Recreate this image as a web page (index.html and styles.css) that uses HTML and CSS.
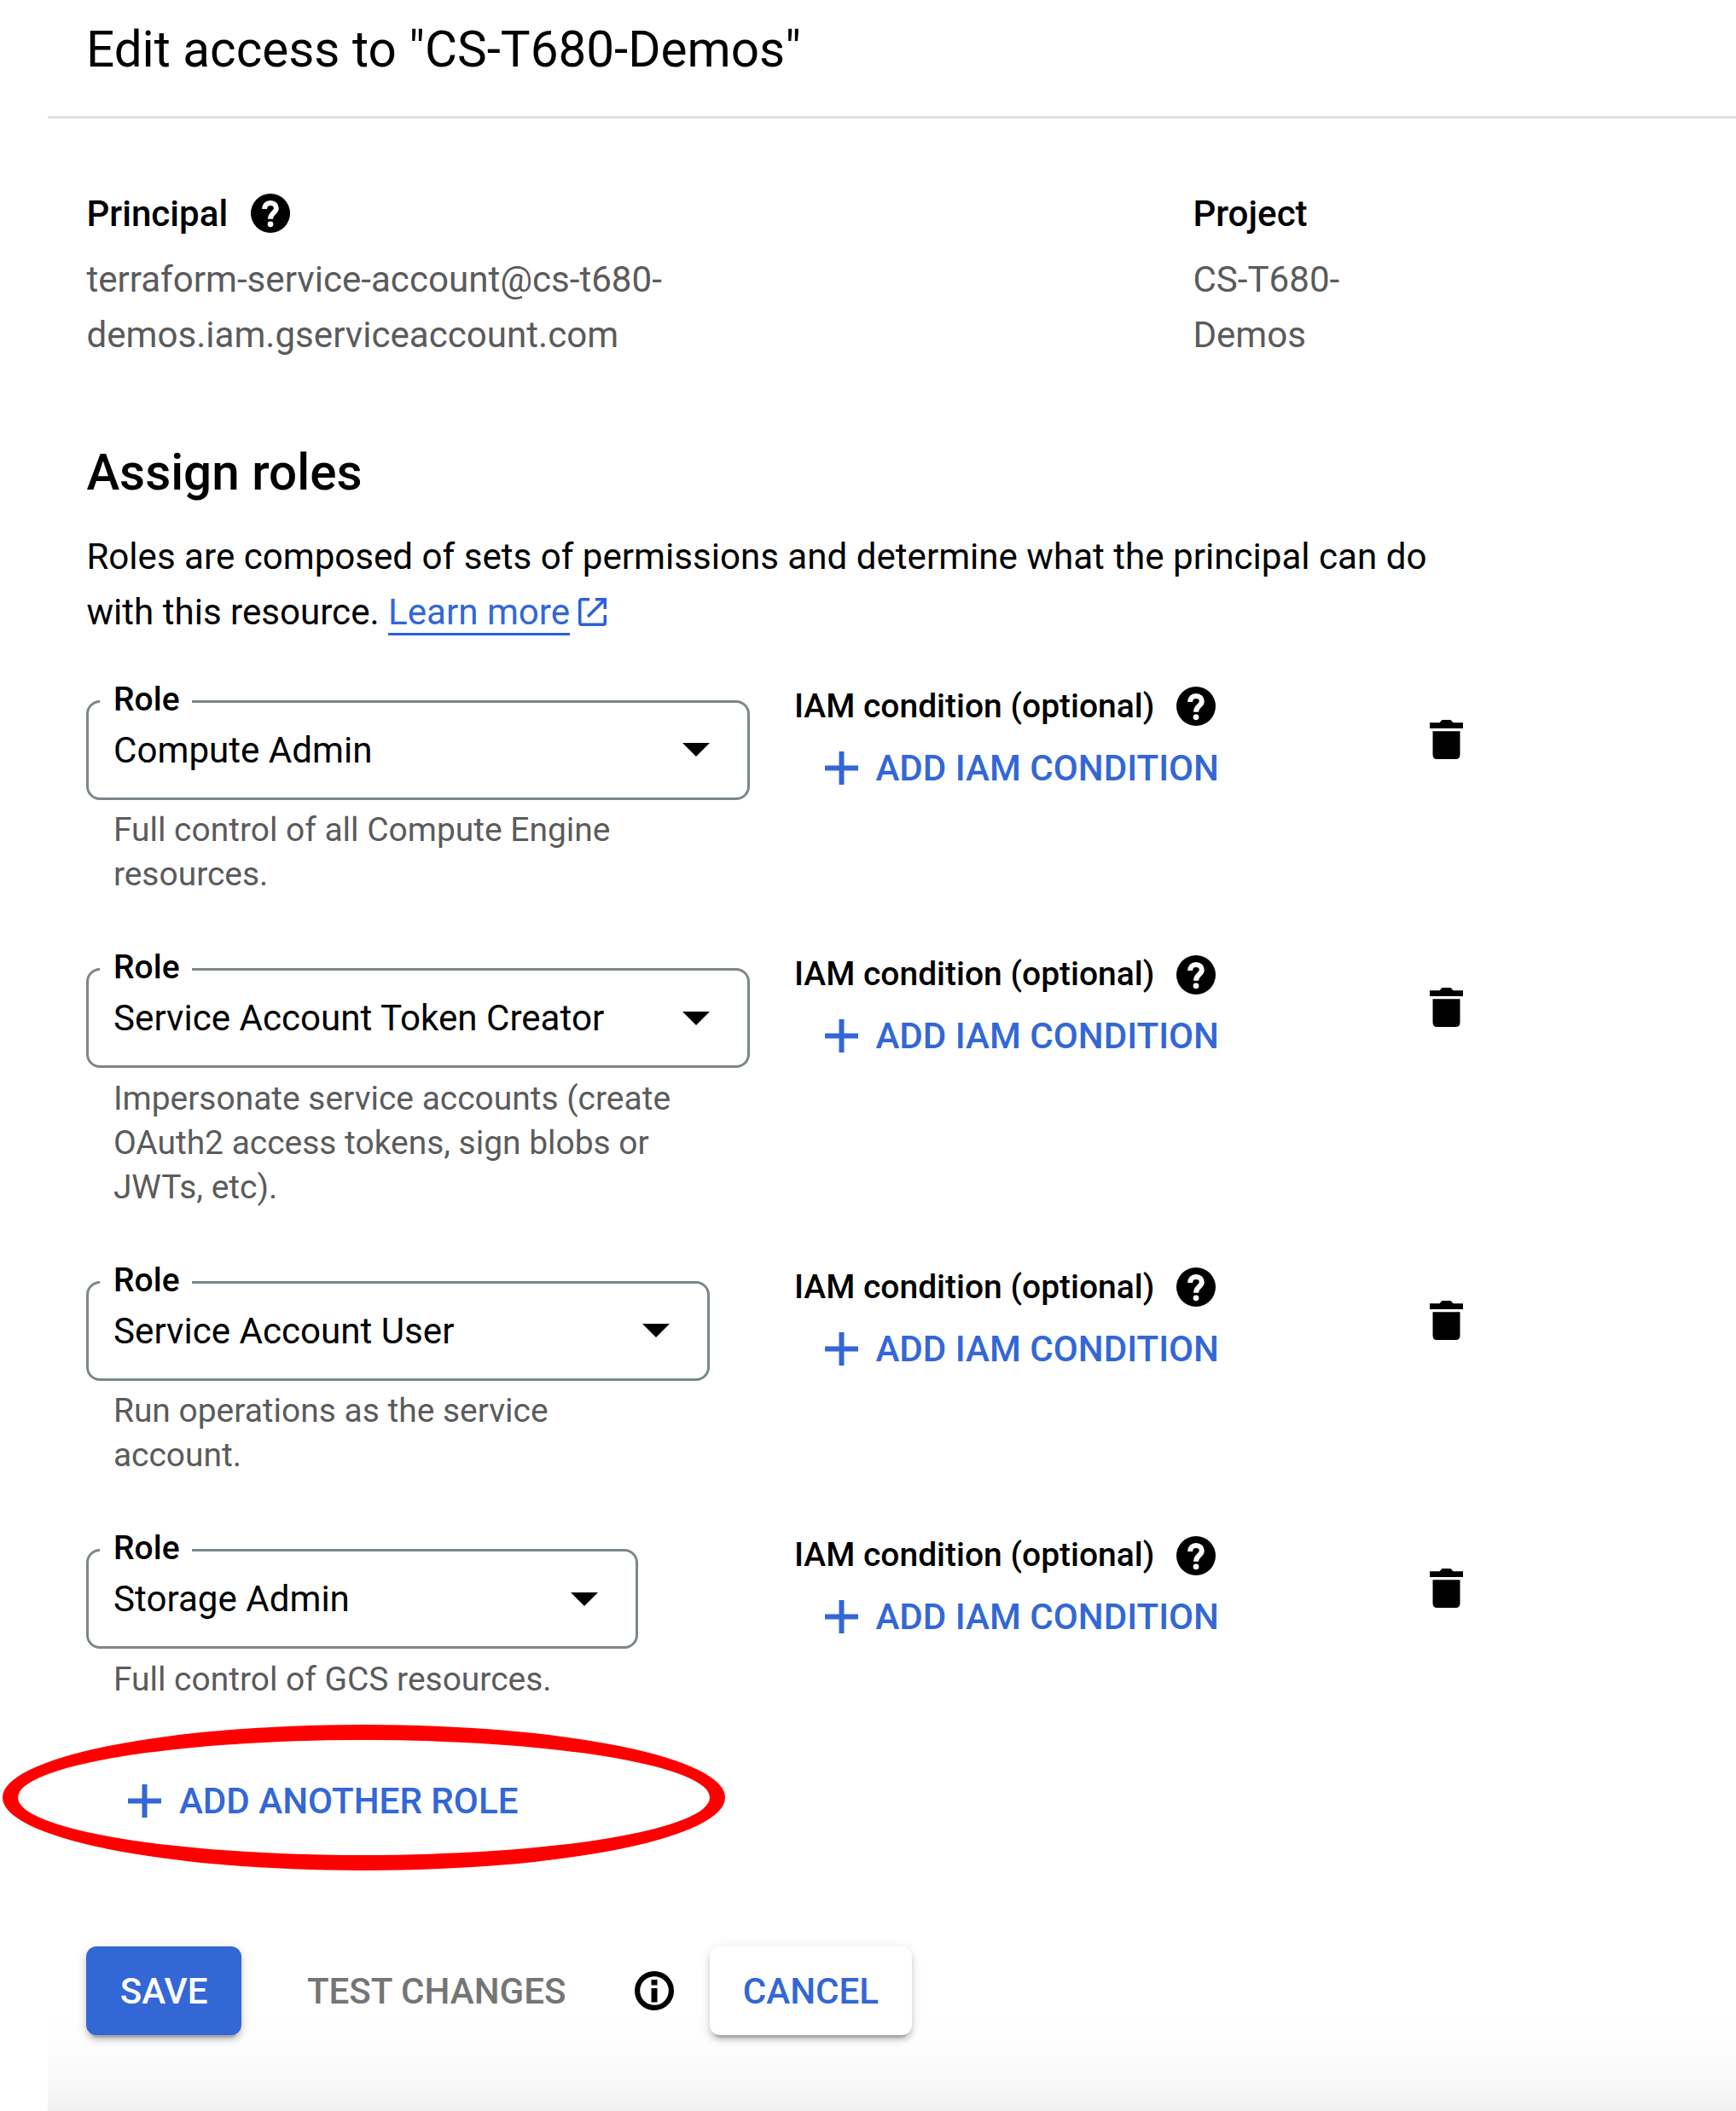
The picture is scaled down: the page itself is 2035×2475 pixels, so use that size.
FILE: index.html
```
<!DOCTYPE html>
<html lang="en">
<head>
<meta charset="utf-8">
<title>Edit access</title>
<link rel="stylesheet" href="styles.css">
</head>
<body>
<svg class="sprite" aria-hidden="true">
  <symbol id="help" viewBox="0 0 46 46">
    <circle cx="23" cy="23" r="23"/>
    <path d="M16.1 18C16.1 13.6 18.9 11 23 11S29.8 13.6 29.8 17.2C29.8 22.4 23 22.6 23 29.8" fill="none" stroke="#fff" stroke-width="6"/>
    <circle cx="23" cy="35.8" r="3.4" fill="#fff"/>
  </symbol>
  <symbol id="plus" viewBox="0 0 39 39"><path d="M16.5 0h6v16.5H39v6H22.5V39h-6V22.500H0v-6h16.500z"/></symbol>
  <symbol id="trash" viewBox="0 0 39 46"><path d="M0 3.300H11.500L14.500 0H24.500L27.500 3.300H39V10H0zM3.500 13.300H35.500V40.500Q35.500 46 30.500 46H8.500Q3.500 46 3.500 40.500z"/></symbol>
  <symbol id="caret" viewBox="0 0 32 16"><path d="M0 0h32L16 16z"/></symbol>
</svg>

<main class="panel">
  <header class="header"><h1 class="title">Edit access to "CS-T680-Demos"</h1></header>

  <div class="content">
    <section class="summary">
      <div>
        <h2 class="label">Principal <svg class="help"><use href="#help"/></svg></h2>
        <p class="value">terraform-service-account@cs-t680-<br>demos.iam.gserviceaccount.com</p>
      </div>
      <div>
        <h2 class="label">Project</h2>
        <p class="value">CS-T680-<br>Demos</p>
      </div>
    </section>

    <h2 class="section-title">Assign roles</h2>
    <p class="intro">Roles are composed of sets of permissions and determine what the principal can do<br>with this resource. <a class="link">Learn more</a><svg class="external" viewBox="0 0 32 32"><path d="M12.700 1.700H3.700Q1.700 1.700 1.700 3.700V28.300Q1.700 30.300 3.700 30.300H28.300Q30.300 30.300 30.300 28.300V19.300M19.300 1.700H30.300V12.700M30 2L10.700 21.300" fill="none" stroke="currentColor" stroke-width="3.400"/></svg></p>

    <div class="roles">
      <div class="row">
        <div class="role">
          <fieldset class="select"><legend class="legend"><span>Role</span></legend><div class="choice">Compute Admin<svg class="caret"><use href="#caret"/></svg></div></fieldset>
          <p class="hint">Full control of all Compute Engine resources.</p>
        </div>
        <div class="condition">
          <div class="condition-label">IAM condition (optional)<svg class="help"><use href="#help"/></svg></div>
          <div class="add"><svg class="plus"><use href="#plus"/></svg>ADD IAM CONDITION</div>
        </div>
        <svg class="trash"><use href="#trash"/></svg>
      </div>

      <div class="row">
        <div class="role">
          <fieldset class="select"><legend class="legend"><span>Role</span></legend><div class="choice">Service Account Token Creator<svg class="caret"><use href="#caret"/></svg></div></fieldset>
          <p class="hint">Impersonate service accounts (create OAuth2 access tokens, sign blobs or JWTs, etc).</p>
        </div>
        <div class="condition">
          <div class="condition-label">IAM condition (optional)<svg class="help"><use href="#help"/></svg></div>
          <div class="add"><svg class="plus"><use href="#plus"/></svg>ADD IAM CONDITION</div>
        </div>
        <svg class="trash"><use href="#trash"/></svg>
      </div>

      <div class="row">
        <div class="role role-medium">
          <fieldset class="select"><legend class="legend"><span>Role</span></legend><div class="choice">Service Account User<svg class="caret"><use href="#caret"/></svg></div></fieldset>
          <p class="hint">Run operations as the service account.</p>
        </div>
        <div class="condition">
          <div class="condition-label">IAM condition (optional)<svg class="help"><use href="#help"/></svg></div>
          <div class="add"><svg class="plus"><use href="#plus"/></svg>ADD IAM CONDITION</div>
        </div>
        <svg class="trash"><use href="#trash"/></svg>
      </div>

      <div class="row">
        <div class="role role-narrow">
          <fieldset class="select"><legend class="legend"><span>Role</span></legend><div class="choice">Storage Admin<svg class="caret"><use href="#caret"/></svg></div></fieldset>
          <p class="hint">Full control of GCS resources.</p>
        </div>
        <div class="condition">
          <div class="condition-label">IAM condition (optional)<svg class="help"><use href="#help"/></svg></div>
          <div class="add"><svg class="plus"><use href="#plus"/></svg>ADD IAM CONDITION</div>
        </div>
        <svg class="trash"><use href="#trash"/></svg>
      </div>
    </div>

    <div class="add add-role"><svg class="plus"><use href="#plus"/></svg>ADD ANOTHER ROLE
      <span class="highlight"></span>
    </div>

    <footer class="actions">
      <div class="button save">SAVE</div>
      <div class="test">TEST CHANGES</div>
      <svg class="info" viewBox="0 0 46 46"><circle cx="23" cy="23" r="19.900" fill="none" stroke="#000" stroke-width="6.200"/><path d="M19.500 10h7v6.500h-7zM19.500 20h7v16.500h-7z"/></svg>
      <div class="button cancel">CANCEL</div>
    </footer>
  </div>
</main>
</body>
</html>
```
FILE: styles.css
```
* { box-sizing: border-box; }

body {
  margin: 0;
  background: #fff;
  color: #000;
  font: 400 42.12px/65px Roboto, sans-serif;
}

h1, h2, p { margin: 0; font: inherit; }

.sprite { display: none; }

.panel {
  height: 2475px;
  margin-left: 56px;
  overflow: visible;
  background: linear-gradient(rgba(255, 255, 255, 0) 2360px, #fdfdfd 2400px, #f8f8f8 2445px, #f0f0f0 2475px);
}

.header {
  height: 139px;
  padding: 28px 0 0 45px;
  border-bottom: 3px solid #e0e0e0;
}

.title {
  font-size: 58.4px;
  line-height: 60px;
}

.content { padding: 81px 0 0 45.4px; }

.summary {
  display: grid;
  grid-template-columns: 1297px auto;
}

.label {
  display: flex;
  align-items: center;
  gap: 27px;
  height: 60px;
  margin-bottom: 15.4px;
  font-weight: 500;
}

.help {
  flex: none;
  width: 46px;
  height: 46px;
}

.value { color: #5b5b5b; }

.section-title {
  margin-top: 89px;
  font-size: 58.4px;
  font-weight: 500;
  line-height: 80px;
}

.intro { margin-top: 25.6px; }

.link {
  border-bottom: 3px solid #2a60d8;
  color: #3367d6;
}

.external {
  width: 33px;
  height: 33px;
  margin-left: 9.5px;
  vertical-align: -2px;
  color: #2a60d8;
}

.roles {
  display: grid;
  gap: 84.2px;
  padding-top: 71px;
}

.row {
  display: grid;
  grid-template-columns: 829.5px 745.5px auto;
  align-items: start;
}

.role { width: 778px; }
.role-medium { width: 731px; }
.role-narrow { width: 647px; }

.select {
  height: 117px;
  margin: 0;
  padding: 0 44.5px 0 28.7px;
  border: 3px solid #7d868b;
  border-radius: 16px;
}

.legend {
  height: 3px;
  margin-left: -16px;
  padding: 0 14px 0 16px;
  font-size: 39px;
  font-weight: 500;
}

.legend span {
  display: block;
  margin-top: -18.4px;
  line-height: 34px;
}

.choice {
  display: flex;
  align-items: center;
  justify-content: space-between;
  height: 111px;
}

.caret { width: 32px; height: 16px; }

.hint {
  margin-top: 9.3px;
  padding: 0 70px 0 31.5px;
  color: #5b5b5b;
  font-size: 38.95px;
  line-height: 52px;
}

.condition { margin-top: -16.5px; }

.condition-label {
  display: flex;
  align-items: center;
  gap: 26px;
  height: 48px;
  font-size: 39px;
  font-weight: 500;
}

.add {
  display: flex;
  align-items: center;
  gap: 20.5px;
  height: 60px;
  margin-top: 18px;
  padding-left: 36px;
  color: #3367d6;
  font-weight: 500;
}

.plus {
  width: 39px;
  height: 39px;
  fill: #3367d6;
}

.trash {
  width: 39px;
  height: 46px;
  margin-top: 23px;
}

.add-role {
  position: relative;
  margin-top: 87px;
  padding-left: 49px;
}

/* Ring drawn over the button to call attention to it */
.highlight {
  position: absolute;
  top: -60px;
  left: -98.4px;
  width: 847px;
  height: 171px;
  border: 18px solid #f00;
  border-radius: 50%;
}

.actions {
  display: flex;
  align-items: center;
  margin-top: 140px;
  font-weight: 500;
}

.button {
  display: flex;
  align-items: center;
  justify-content: center;
  height: 104px;
  padding-top: 1.5px;
  border-radius: 12px;
  box-shadow: 0 9px 3px -6px rgba(0, 0, 0, 0.2), 0 6px 6px rgba(0, 0, 0, 0.14), 0 3px 14px rgba(0, 0, 0, 0.12);
}

.save {
  width: 181.5px;
  background: #3367d6;
  color: #fff;
}

.test {
  width: 384px;
  margin-left: 77px;
  padding-top: 1.5px;
  color: #757575;
}

.info { width: 46px; height: 46px; }

.cancel {
  width: 237px;
  margin-left: 42px;
  background: #fff;
  color: #3367d6;
}
```
